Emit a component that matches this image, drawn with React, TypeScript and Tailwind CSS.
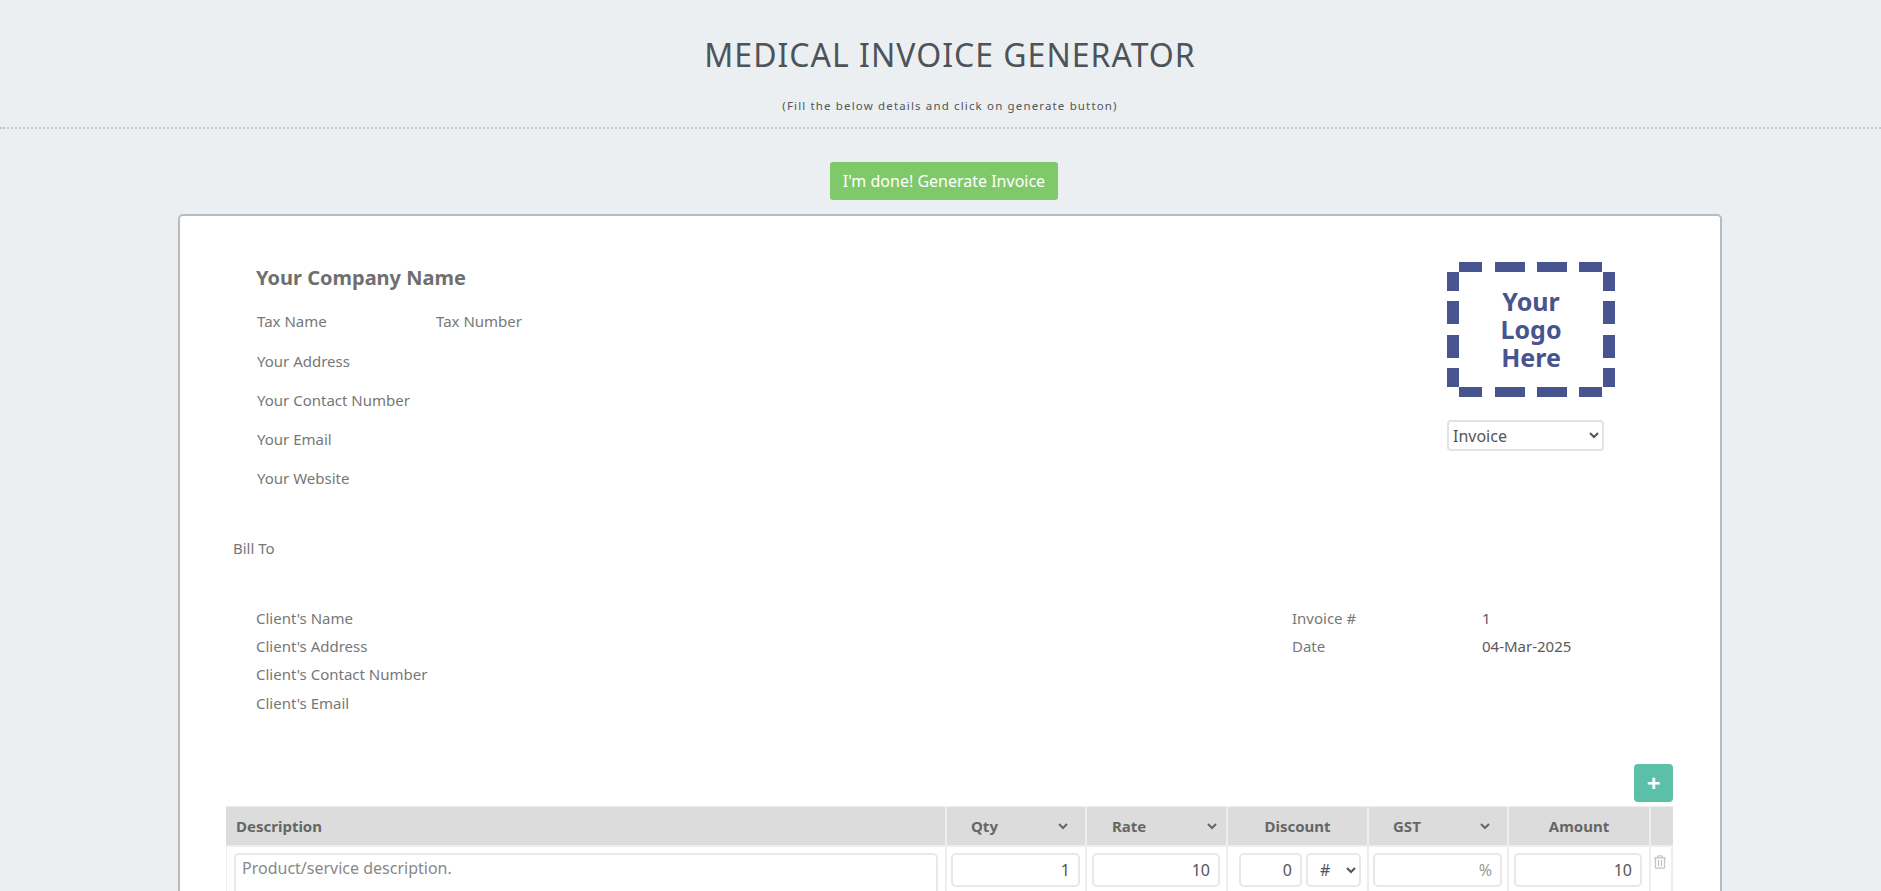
import { FaRegTrashAlt } from "react-icons/fa";

const font = "font-['Noto_Sans','Open_Sans',sans-serif]";

function Logo() {
  const blue = "#47548f";
  const hs = [[12, 23], [48, 30], [90, 30], [132, 23]];
  const vs = [[10, 19], [39, 23], [73, 23], [106, 19]];
  return (
    <svg width="168" height="135" viewBox="0 0 168 135" className="block">
      {hs.map(([x, w]) => (
        <g key={x} fill={blue}>
          <rect x={x} y="0" width={w} height="10" />
          <rect x={x} y="125" width={w} height="10" />
        </g>
      ))}
      {vs.map(([y, h]) => (
        <g key={y} fill={blue}>
          <rect x="0" y={y} width="12" height={h} />
          <rect x="156" y={y} width="12" height={h} />
        </g>
      ))}
      <g fill={blue} fontFamily="'Noto Sans','Open Sans',sans-serif" fontWeight="700" fontSize="25" textAnchor="middle">
        <text x="84" y="49">Your</text>
        <text x="84" y="77">Logo</text>
        <text x="84" y="105">Here</text>
      </g>
    </svg>
  );
}

function HeadSelect({ label, w, pad }: { label: string; w: string; pad: string }) {
  return (
    <select className={`${w} ${pad} bg-transparent text-[15px] font-bold text-[#666] outline-none`} defaultValue={label}>
      <option>{label}</option>
    </select>
  );
}

const input = "h-[34px] rounded-[5px] border-2 border-[#e8e8e8] bg-white px-[8px] text-right text-[16px] text-[#555] outline-none";

export default function App() {
  return (
    <div className={`${font} h-screen overflow-hidden bg-[#ebeff2]`}>
      <header className="h-[129px] border-b-2 border-dotted border-[#c4c6c8] text-center">
        <h1 className="ml-[19px] pt-[33px] text-[32px] leading-[44px] tracking-[1px] text-[#4d5359]">MEDICAL INVOICE GENERATOR</h1>
        <p className="ml-[19px] mt-[20px] text-[11.5px] leading-[18px] tracking-[1.15px] text-[#555]">(Fill the below details and click on generate button)</p>
      </header>

      <div className="ml-[830px] mt-[33px] flex h-[38px] w-[228px] items-center justify-center rounded-[3px] bg-[#80c96a] text-[16px] text-white">
        I'm done! Generate Invoice
      </div>

      <main className="ml-[178px] mt-[14px] h-[700px] w-[1544px] rounded-[5px] border-2 border-[#b9bbbf] bg-white text-[15px] text-[#777]">
        <section className="flex justify-between pl-[77px] pr-[105px] pt-[46px]">
          <div>
            <div className="-ml-[1px] text-[20px] font-bold leading-[32px] text-[#706f6f]">Your Company Name</div>
            <div className="mt-[8px] flex h-[39px] items-center">
              <span className="w-[179px]">Tax Name</span>
              <span>Tax Number</span>
            </div>
            <div className="flex h-[39.5px] items-center">Your Address</div>
            <div className="flex h-[39.5px] items-center">Your Contact Number</div>
            <div className="flex h-[39px] items-center">Your Email</div>
            <div className="flex h-[39px] items-center">Your Website</div>
          </div>
          <div className="w-[168px]">
            <Logo />
            <select className="mt-[23px] h-[31px] w-[157px] rounded-[4px] border-2 border-[#e3e3e3] bg-white text-[16px] text-[#555] outline-none" defaultValue="Invoice">
              <option>Invoice</option>
            </select>
          </div>
        </section>

        <div className="mt-[38px] pl-[53px] leading-[24px]">Bill To</div>

        <section className="mt-[44px] flex pl-[76px] pr-[0px]">
          <div className="w-[1036px]">
            <div className="flex h-[28px] items-center">Client's Name</div>
            <div className="flex h-[28px] items-center">Client's Address</div>
            <div className="flex h-[29px] items-center">Client's Contact Number</div>
            <div className="flex h-[28px] items-center">Client's Email</div>
          </div>
          <div className="w-[190px]">
            <div className="flex h-[28px] items-center">Invoice #</div>
            <div className="flex h-[28px] items-center">Date</div>
          </div>
          <div className="text-[#5a5a5a]">
            <div className="flex h-[28px] items-center">1</div>
            <div className="flex h-[28px] items-center">04-Mar-2025</div>
          </div>
        </section>

        <section className="ml-[46px] mt-[47px] w-[1447px]">
          <div className="flex justify-end">
            <div className="flex h-[38px] w-[39px] items-center justify-center rounded-[4px] bg-[#5cc0a9] text-[24px] font-bold leading-none text-white">+</div>
          </div>
          <div className="mt-[4px] grid grid-cols-[719px_140px_141px_141px_140px_142px_24px] border-t border-[#eee] bg-white">
            <div className="flex h-[38px] items-center border-b-0 bg-[#dcdcdc] pl-[10px] text-[15px] font-bold text-[#666]">Description</div>
            <div className="flex h-[38px] items-center border-l-2 border-[#eee] bg-[#dcdcdc] pl-[20px]"><HeadSelect label="Qty" w="w-[104px]" pad="" /></div>
            <div className="flex h-[38px] items-center border-l-2 border-[#eee] bg-[#dcdcdc] pl-[21px]"><HeadSelect label="Rate" w="w-[112px]" pad="" /></div>
            <div className="flex h-[38px] items-center justify-center border-l-2 border-[#eee] bg-[#dcdcdc] text-[15px] font-bold text-[#666]">Discount</div>
            <div className="flex h-[38px] items-center border-l-2 border-[#eee] bg-[#dcdcdc] pl-[20px]"><HeadSelect label="GST" w="w-[104px]" pad="" /></div>
            <div className="flex h-[38px] items-center justify-center border-l-2 border-[#eee] bg-[#dcdcdc] text-[15px] font-bold text-[#666]">Amount</div>
            <div className="h-[38px] border-l-2 border-[#eee] bg-[#dcdcdc]" />

            <div className="col-span-7 h-[2px] bg-[#eee]" />

            <div className="border-l border-[#eee] px-[7px] pt-[6px]">
              <textarea
                className="block h-[60px] w-full resize-none rounded-[5px] border-2 border-[#e8e8e8] px-[6px] py-[1px] text-[16px] text-[#555] outline-none placeholder:text-[#888]"
                placeholder="Product/service description."
              />
            </div>
            <div className="border-l-2 border-[#eee] pl-[4px] pt-[6px]"><input readOnly defaultValue="1" className={`${input} w-[129px]`} /></div>
            <div className="border-l-2 border-[#eee] pl-[5px] pt-[6px]"><input readOnly defaultValue="10" className={`${input} w-[128px]`} /></div>
            <div className="flex gap-[4px] border-l-2 border-[#eee] pl-[11px] pt-[6px]">
              <input readOnly defaultValue="0" className={`${input} w-[63px]`} />
              <select className="h-[34px] w-[55px] rounded-[5px] border-2 border-[#e8e8e8] bg-white pl-[8px] text-[16px] text-[#555] outline-none" defaultValue="#">
                <option>#</option>
              </select>
            </div>
            <div className="border-l-2 border-[#eee] pl-[4px] pt-[6px]"><input readOnly placeholder="%" className={`${input} w-[129px] placeholder:text-[#999]`} /></div>
            <div className="border-l-2 border-[#eee] pl-[5px] pt-[6px]"><input readOnly defaultValue="10" className={`${input} w-[128px] bg-[#eeeeee]`} /></div>
            <div className="border-x-2 border-[#eee] pl-[3px] pt-[8px] text-[#c4c4c4]"><FaRegTrashAlt className="h-[14px] w-[12px]" /></div>
          </div>
        </section>
      </main>
    </div>
  );
}
